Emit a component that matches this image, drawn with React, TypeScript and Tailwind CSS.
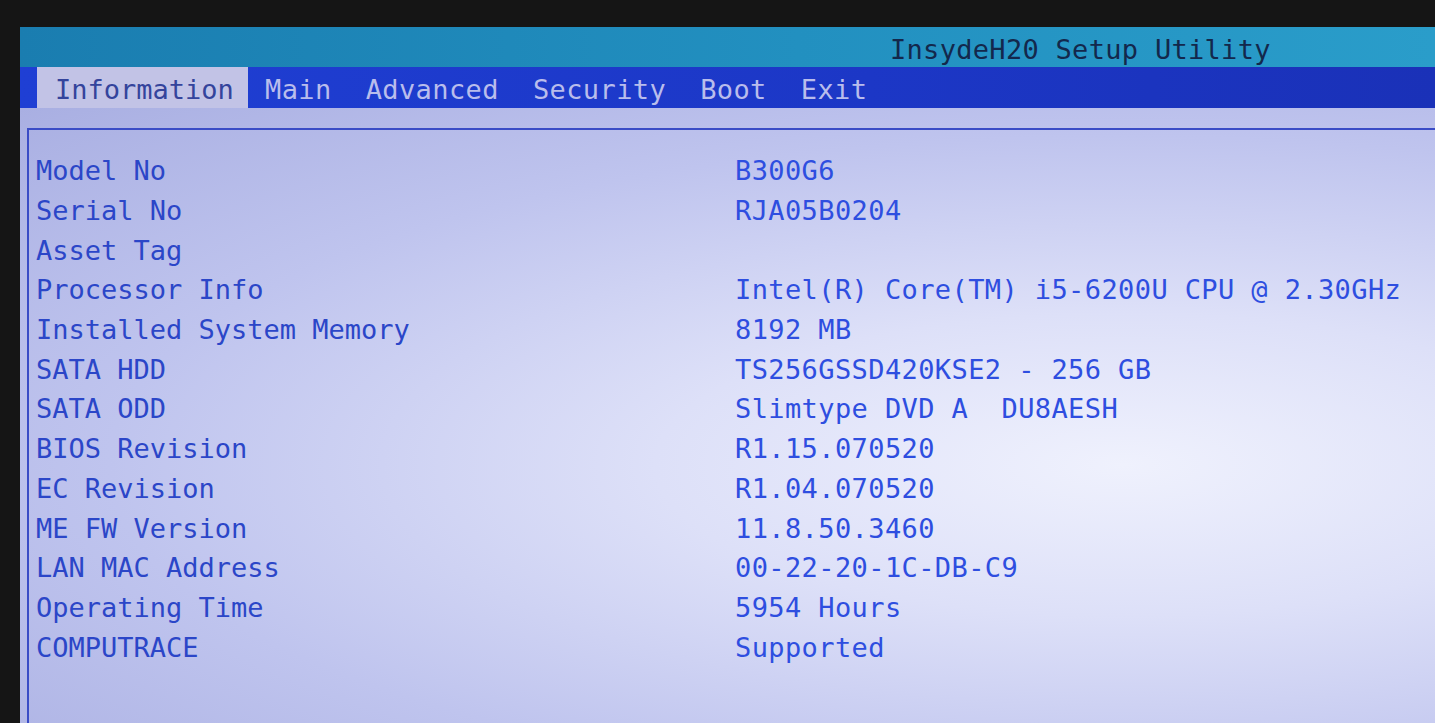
import React from 'react';

const rows: { label: string; value: string }[] = [
  { label: 'Model No', value: 'B300G6' },
  { label: 'Serial No', value: 'RJA05B0204' },
  { label: 'Asset Tag', value: '' },
  { label: 'Processor Info', value: 'Intel(R) Core(TM) i5-6200U CPU @ 2.30GHz' },
  { label: 'Installed System Memory', value: '8192 MB' },
  { label: 'SATA HDD', value: 'TS256GSSD420KSE2 - 256 GB' },
  { label: 'SATA ODD', value: 'Slimtype DVD A  DU8AESH' },
  { label: 'BIOS Revision', value: 'R1.15.070520' },
  { label: 'EC Revision', value: 'R1.04.070520' },
  { label: 'ME FW Version', value: '11.8.50.3460' },
  { label: 'LAN MAC Address', value: '00-22-20-1C-DB-C9' },
  { label: 'Operating Time', value: '5954 Hours' },
  { label: 'COMPUTRACE', value: 'Supported' },
];

const tabs = ['Main', 'Advanced', 'Security', 'Boot', 'Exit'];

const mono = "font-['DejaVu_Sans_Mono','Liberation_Mono',monospace]";

export default function App() {
  return (
    <div className={`w-[1435px] h-[723px] overflow-hidden bg-[#151515] pt-[27px] pl-[20px] flex flex-col ${mono} text-[27px] leading-none`}>
      {/* title bar */}
      <div className="h-[40px] shrink-0 bg-[linear-gradient(to_right,#1a7db0,#2290c0_55%,#2a9dca)] flex items-center">
        <span className="ml-[870px] pt-[4px] text-[#13284c] tracking-[0.3px] whitespace-pre">InsydeH20 Setup Utility</span>
      </div>

      {/* menu tabs */}
      <div className="h-[41px] shrink-0 bg-[linear-gradient(to_right,#1f3fd4,#1c37c6_60%,#1a31b8)] flex items-stretch pl-[17px]">
        <div className="w-[211px] bg-[#c2c3e6] flex items-center pl-[18px] pt-[4px] text-[#34449c]">Information</div>
        <div className="flex items-center gap-[34px] ml-[17px] pt-[4px] tracking-[0.4px] text-[#b9bdec]">
          {tabs.map((t) => (
            <span key={t}>{t}</span>
          ))}
        </div>
      </div>

      {/* content */}
      <div className="flex-1 pt-[20px] bg-[radial-gradient(ellipse_at_78%_58%,#eff1fd_0%,#dde0f8_30%,#bfc4ee_65%,#a9afe2_100%)]">
        <div className="ml-[7px] h-full border-t-2 border-l-2 border-[#3a4cc6] pt-[21px] pl-[7px]">
          {rows.map((r) => (
            <div key={r.label} className="flex h-[39.7px] items-center whitespace-pre">
              <span className="w-[699px] shrink-0 text-[#2b46c8]">{r.label}</span>
              <span className="text-[#2e4ee0] tracking-[0.4px]">{r.value}</span>
            </div>
          ))}
        </div>
      </div>
    </div>
  );
}
